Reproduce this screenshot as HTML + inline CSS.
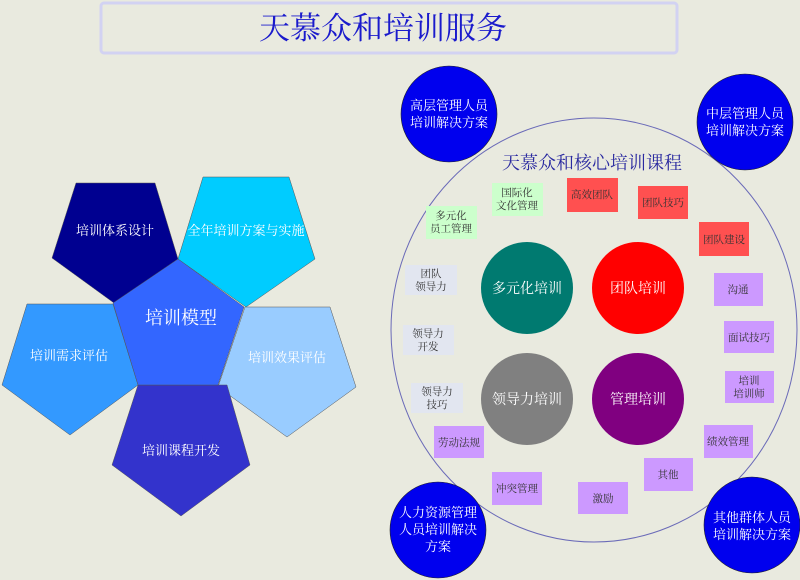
<!DOCTYPE html>
<html><head><meta charset="utf-8"><style>
body{margin:0;background:#e9eadf;}
svg{display:block;font-family:"Liberation Serif","Noto Serif CJK SC",serif;}
</style></head><body>
<svg width="800" height="580" viewBox="0 0 800 580" xmlns="http://www.w3.org/2000/svg">
<rect width="800" height="580" fill="#e9eadf"/>
<rect x="101" y="3" width="576" height="50" rx="3" fill="#e9eadf" stroke="#d2d2f2" stroke-width="3"/>
<text x="383" y="39" font-size="31" fill="#1a1acc" text-anchor="middle">天慕众和培训服务</text>

<g stroke="#555" stroke-width="0.5">
<polygon points="76,183 155,183 178,259 114,303 52,258" fill="#000090"/>
<polygon points="203,177 289,177 315,259 246,307 178,259" fill="#00ccff"/>
<polygon points="27,304 113,304 138,385 70,435 2,385" fill="#3399ff"/>
<polygon points="245,307 330,307 356,387 287,437 218,387" fill="#99ccff"/>
<polygon points="138,385 227,385 250,465 181,516 112,465" fill="#3333cc"/>
<polygon points="178,259 244,307 218,385 138,385 113,303" fill="#3366ff"/>
</g>
<g fill="#fff" text-anchor="middle" font-size="13">
<text x="115" y="235">培训体系设计</text>
<text x="246" y="235">全年培训方案与实施</text>
<text x="181" y="324" font-size="18">培训模型</text>
<text x="69" y="360">培训需求评估</text>
<text x="287" y="362">培训效果评估</text>
<text x="181" y="455">培训课程开发</text>
</g>

<ellipse cx="594" cy="330" rx="203" ry="212" fill="none" stroke="#6a6ab8" stroke-width="1"/>
<text x="592" y="169" font-size="18" fill="#2a2aa0" text-anchor="middle">天慕众和核心培训课程</text>

<g fill="#0000ee" stroke="#222" stroke-width="0.6">
<circle cx="449" cy="114" r="48"/>
<circle cx="745" cy="122" r="48"/>
<circle cx="438" cy="530" r="48"/>
<circle cx="752" cy="525" r="48"/>
</g>
<g fill="#fff" text-anchor="middle" font-size="13">
<text x="449" y="110">高层管理人员</text><text x="449" y="127">培训解决方案</text>
<text x="745" y="118">中层管理人员</text><text x="745" y="135">培训解决方案</text>
<text x="438" y="517">人力资源管理</text><text x="438" y="534">人员培训解决</text><text x="438" y="551">方案</text>
<text x="752" y="522">其他群体人员</text><text x="752" y="539">培训解决方案</text>
</g>

<circle cx="527" cy="288" r="46" fill="#007a70"/>
<circle cx="638" cy="288" r="46" fill="#ff0000"/>
<circle cx="527" cy="399" r="46" fill="#808080"/>
<circle cx="638" cy="399" r="46" fill="#800080"/>
<g fill="#fff" text-anchor="middle" font-size="14">
<text x="527" y="293">多元化培训</text>
<text x="638" y="293">团队培训</text>
<text x="527" y="404">领导力培训</text>
<text x="638" y="404">管理培训</text>
</g>

<g>
<rect x="492" y="183" width="51" height="33" fill="#ccffcc"/>
<rect x="426" y="206" width="51" height="33" fill="#ccffcc"/>
<rect x="567" y="178" width="51" height="34" fill="#ff5050"/>
<rect x="638" y="186" width="50" height="33" fill="#ff5050"/>
<rect x="699" y="222" width="50" height="34" fill="#ff5050"/>
<rect x="405" y="265" width="52" height="30" fill="#e2e6f0"/>
<rect x="403" y="325" width="51" height="30" fill="#e2e6f0"/>
<rect x="411" y="383" width="52" height="30" fill="#e2e6f0"/>
<rect x="714" y="273" width="49" height="33" fill="#cc99ff"/>
<rect x="724" y="321" width="50" height="32" fill="#cc99ff"/>
<rect x="725" y="371" width="49" height="32" fill="#cc99ff"/>
<rect x="434" y="426" width="50" height="32" fill="#cc99ff"/>
<rect x="704" y="425" width="49" height="33" fill="#cc99ff"/>
<rect x="644" y="458" width="49" height="33" fill="#cc99ff"/>
<rect x="492" y="472" width="50" height="33" fill="#cc99ff"/>
<rect x="578" y="482" width="50" height="32" fill="#cc99ff"/>
</g>
<g fill="#333" text-anchor="middle" font-size="10.5">
<text x="517" y="196">国际化</text><text x="517" y="209">文化管理</text>
<text x="451" y="219">多元化</text><text x="451" y="232">员工管理</text>
<text x="592" y="198">高效团队</text>
<text x="663" y="206">团队技巧</text>
<text x="724" y="243">团队建设</text>
<text x="431" y="277">团队</text><text x="431" y="290">领导力</text>
<text x="428" y="337">领导力</text><text x="428" y="350">开发</text>
<text x="437" y="395">领导力</text><text x="437" y="408">技巧</text>
<text x="738" y="293">沟通</text>
<text x="749" y="341">面试技巧</text>
<text x="749" y="384">培训</text><text x="749" y="397">培训师</text>
<text x="459" y="446">劳动法规</text>
<text x="728" y="445">绩效管理</text>
<text x="668" y="478">其他</text>
<text x="517" y="492">冲突管理</text>
<text x="603" y="502">激励</text>
</g>
</svg>
</body></html>
